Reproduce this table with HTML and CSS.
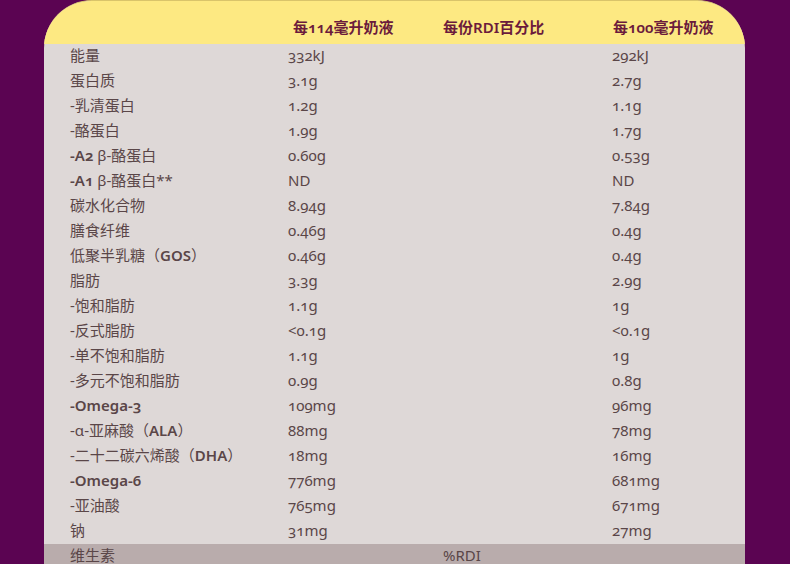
FILE: index.html
```html
<!DOCTYPE html>
<html lang="zh">
<head>
<meta charset="utf-8">
<title>营养成分表</title>
<link rel="stylesheet" href="styles.css">
</head>
<body>
<div class="panel">
  <div class="row head">
    <div></div>
    <div class="h1">每114毫升奶液</div>
    <div>每份RDI百分比</div>
    <div class="h3">每100毫升奶液</div>
  </div>
  <div class="row"><div>能量</div><div>332kJ</div><div></div><div>292kJ</div></div>
  <div class="row"><div>蛋白质</div><div>3.1g</div><div></div><div>2.7g</div></div>
  <div class="row"><div>-乳清蛋白</div><div>1.2g</div><div></div><div>1.1g</div></div>
  <div class="row"><div>-酪蛋白</div><div>1.9g</div><div></div><div>1.7g</div></div>
  <div class="row"><div><b>-A2</b> β-酪蛋白</div><div>0.60g</div><div></div><div>0.53g</div></div>
  <div class="row"><div><b>-A1</b> β-酪蛋白**</div><div>ND</div><div></div><div>ND</div></div>
  <div class="row"><div>碳水化合物</div><div>8.94g</div><div></div><div>7.84g</div></div>
  <div class="row"><div>膳食纤维</div><div>0.46g</div><div></div><div>0.4g</div></div>
  <div class="row"><div>低聚半乳糖（<b>GOS</b>）</div><div>0.46g</div><div></div><div>0.4g</div></div>
  <div class="row"><div>脂肪</div><div>3.3g</div><div></div><div>2.9g</div></div>
  <div class="row"><div>-饱和脂肪</div><div>1.1g</div><div></div><div>1g</div></div>
  <div class="row"><div>-反式脂肪</div><div>&lt;0.1g</div><div></div><div>&lt;0.1g</div></div>
  <div class="row"><div>-单不饱和脂肪</div><div>1.1g</div><div></div><div>1g</div></div>
  <div class="row"><div>-多元不饱和脂肪</div><div>0.9g</div><div></div><div>0.8g</div></div>
  <div class="row"><div><b>-Omega-3</b></div><div>109mg</div><div></div><div>96mg</div></div>
  <div class="row"><div>-α-亚麻酸（<b>ALA</b>）</div><div>88mg</div><div></div><div>78mg</div></div>
  <div class="row"><div>-二十二碳六烯酸（<b>DHA</b>）</div><div>18mg</div><div></div><div>16mg</div></div>
  <div class="row"><div><b>-Omega-6</b></div><div>776mg</div><div></div><div>681mg</div></div>
  <div class="row"><div>-亚油酸</div><div>765mg</div><div></div><div>671mg</div></div>
  <div class="row"><div>钠</div><div>31mg</div><div></div><div>27mg</div></div>
  <div class="row foot"><div>维生素</div><div></div><div>%RDI</div><div></div></div>
</div>
</body>
</html>
```

FILE: styles.css
```css
html, body {
  margin: 0;
  padding: 0;
  background: #5b0452;
  height: 564px;
  overflow: hidden;
}
.panel {
  margin-left: 44px;
  width: 701px;
  background: #ded8d7;
  border-radius: 48px 48px 0 0;
  border-top: 1px solid #d9c46a;
  overflow: hidden;
  font-family: "Noto Sans", "Noto Sans CJK SC", sans-serif;
  font-variant-numeric: oldstyle-nums;
  color: #5a4648;
  font-size: 15px;
}
.row {
  display: grid;
  grid-template-columns: 218px 155px 169px 1fr;
  padding-left: 26px;
  height: 25px;
  box-sizing: border-box;
  padding-bottom: 2px;
  align-items: center;
  line-height: 23px;
}
.row > div {
  white-space: nowrap;
}
.row b {
  font-weight: 600;
}
.head {
  height: 43px;
  line-height: 40px;
  background: #fde982;
  color: #6b1b3c;
  font-weight: 600;
  padding-top: 6px;
  padding-bottom: 0;
}
.head .h1 {
  padding-left: 5px;
}
.head .h3 {
  padding-left: 1px;
}
.foot {
  background: #b9acac;
  height: 21px;
  padding-bottom: 0;
  line-height: 23px;
  align-items: start;
}
```
